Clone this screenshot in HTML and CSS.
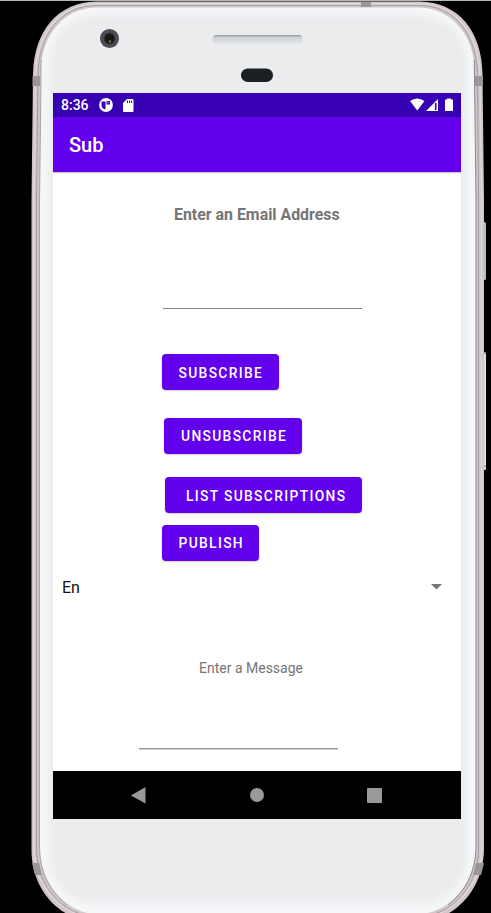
FILE: index.html
```html
<!DOCTYPE html>
<html lang="en">
<head>
<meta charset="utf-8">
<title>Sub</title>
<link rel="stylesheet" href="styles.css">
</head>
<body>
<div class="device">
  <svg class="frame" width="491" height="913" viewBox="0 0 491 913" aria-hidden="true">
    <defs>
      <filter id="soft" x="-10%" y="-10%" width="120%" height="120%"><feGaussianBlur stdDeviation="3"/></filter>
      <linearGradient id="speaker" x1="0" y1="0" x2="0" y2="1"><stop offset="0" stop-color="#90959f"/><stop offset=".3" stop-color="#d0d3d9"/><stop offset="1" stop-color="#e1e3e8"/></linearGradient>
    </defs>
    <rect width="491" height="1" fill="#b5b7b6"/>
    <rect x="482" y="222" width="4" height="58" rx="1.500" fill="#b9bcbd"/>
    <rect x="482" y="352" width="4" height="118" rx="1.500" fill="#dededc"/>
    <path d="M483 353h3M483 466h3" stroke="#777"/>
    <path d="M96 1.500H420C458 2 482 31 482.500 74L484 200V848C484 890 454 921 420 921H95C60 921 31.500 890 31.500 850V200L33 74C34 31 58 2 96 1.500Z" fill="#cfc6c9"/>
    <path d="M96 4H420C456 4 479 34 480 76L481.500 200V848C481.500 886 452 917 420 917H95C63 917 34 888 34 848V200L35.500 76C36 34 60 4 96 4Z" fill="none" stroke="#ded6d9" stroke-width="1.500"/>
    <path d="M96 5.500H420C455 5.500 477 35 477.500 76L478.500 200V848C478.500 886 452 916 420 916H95C63 916 36.500 886 36.500 848V200L38 76C38 35 61 5.500 96 5.500Z" fill="none" stroke="#a69fa3"/>
    <path d="M32.500 76H40V86H32.500ZM475 76H483V86H475ZM361 2H371V7H361ZM32 863H39L42 875H35ZM476 863H484L481 875H473Z" fill="#9c9699"/>
    <path d="M97 7.500H418C451 7.500 474 35 474.500 70L476 200V848C476 882 450 914 418 914H97C65 914 40 882 40 848V200L41 70C41.500 35 64 7.500 97 7.500Z" fill="#f5f6f8"/>
    <path d="M474.300 60L474.500 80 476 200V848Q475 884 448 905" fill="none" stroke="#8d888e"/>
    <path d="M41 60V80L39.500 200V848Q40 884 67 905" fill="none" stroke="#aaa4a8"/>
    <rect x="49" y="15" width="418" height="889" rx="48" fill="#eaecee" filter="url(#soft)"/>
    <circle cx="109.500" cy="38.500" r="9.500" fill="#45474b"/>
    <circle cx="109.500" cy="38.500" r="7.500" fill="none" stroke="#65676b" stroke-dasharray="1 1"/>
    <circle cx="109.500" cy="38.500" r="5.200" fill="#15171a"/>
    <circle cx="110" cy="41.500" r="1.200" fill="#857634"/>
    <rect x="212.500" y="35" width="90" height="8.500" rx="4" fill="url(#speaker)"/>
    <rect x="241" y="68.500" width="32" height="13.500" rx="6.750" fill="#1c2024"/>
  </svg>
  <main class="screen">
    <div class="status">
      <span class="time">8:36</span>
      <svg class="pocket" width="14" height="14" viewBox="0 0 14 14"><circle cx="7" cy="7" r="6.900" fill="#fff"/><path d="M2.500 3.500H6.500V11.500Q2.500 10.500 2.500 7ZM7.500 3H11V6.500H7.500Z" fill="#3700b3"/><path d="M8 3.500H10V5.500H8Z" fill="#fff" opacity=".35"/></svg>
      <svg class="card" width="11" height="13" viewBox="0 0 11 13"><path d="M4 0H9.500Q10.500 0 10.500 1V12Q10.500 13 9.500 13H1Q0 13 0 12V4Z" fill="#fff"/><path d="M4.500 1.500V4M6.500 1.500V4M8.500 1.500V4" stroke="#3700b3"/></svg>
      <svg class="signals" width="44" height="14" viewBox="0 0 44 14"><path d="M0 3Q7.200-2 14.500 3L7.250 12.500Z" fill="#fff"/><path d="M16 13 28 1V13Z" fill="#fff"/><path d="M25.700 5V12" stroke="#3700b3" stroke-width="1.600"/><path d="M35 1.500H37V.500H41V1.500H43V13H35Z" fill="#fff"/></svg>
    </div>
    <header class="appbar">Sub</header>
    <section class="content">
      <h1 class="label email">Enter an Email Address</h1>
      <div class="field email-field"></div>
      <button class="btn subscribe">SUBSCRIBE</button>
      <button class="btn unsubscribe">UNSUBSCRIBE</button>
      <button class="btn list">LIST SUBSCRIPTIONS</button>
      <button class="btn publish">PUBLISH</button>
      <div class="spinner"><span>En</span><svg width="11" height="6" viewBox="0 0 11 6"><path d="M0 0H11L5.500 5.500Z" fill="#757575"/></svg></div>
      <p class="label message">Enter a Message</p>
      <div class="field message-field"></div>
    </section>
    <nav class="nav">
      <svg width="15" height="17" viewBox="0 0 15 17"><path d="M0 8.500 14.500 0V16.500Z" fill="#999"/></svg>
      <svg width="14" height="14" viewBox="0 0 14 14"><circle cx="7" cy="7" r="7" fill="#999"/></svg>
      <svg width="15" height="15" viewBox="0 0 15 15"><rect width="15" height="15" rx="1" fill="#999"/></svg>
    </nav>
  </main>
</div>
</body>
</html>
```
FILE: styles.css
```css
* { box-sizing: border-box; }
body { margin: 0; background: #000; font-family: Roboto, sans-serif; overflow: hidden; }
svg { display: block; flex: none; }
.device { position: relative; width: 491px; height: 913px; padding: 93px 30px 94px 53px; background: #000; overflow: hidden; }
.frame { position: absolute; inset: 0; }
.screen { position: relative; width: 408px; height: 726px; display: flex; flex-direction: column; background: #fff; }
.status { height: 24px; flex: none; display: flex; align-items: center; padding: 0 7px 0 8px; background: #3700b3; color: #fff; }
.time { width: 38px; font-size: 14px; font-weight: 500; line-height: 24px; }
.card { margin-left: 10px; }
.signals { margin-left: auto; }
.appbar { height: 55px; flex: none; padding-left: 16px; background: #6200ee; color: #fff; font-size: 20px; font-weight: 500; line-height: 57px; box-shadow: 0 1px 1px #ccc; }
.content { flex: 1; min-height: 0; display: flex; flex-direction: column; align-items: flex-start; }
.label { margin: 0; color: #757575; white-space: nowrap; }
.email { margin: 33px 0 0 121px; font-size: 15.9px; font-weight: 700; line-height: 20px; }
.field { width: 199px; border-bottom: 1px solid #858585; }
.email-field { height: 84px; margin-left: 110px; }
.btn { height: 36px; flex: none; border: 0; border-radius: 4px; padding: 1px 0 0 17px; background: #6200ee; color: #fff; font: 500 13.8px/36px Roboto, sans-serif; letter-spacing: 1.35px; text-align: left; white-space: nowrap; box-shadow: 0 1px 2px #0003; }
.subscribe { width: 117px; margin: 45px 0 0 109px; padding-left: 16.5px; }
.unsubscribe { width: 138px; margin: 28px 0 0 111px; padding-top: 0; line-height: 35px; }
.list { width: 197px; margin: 23px 0 0 112px; padding-left: 21px; }
.publish { width: 97px; margin: 12px 0 0 109px; padding: 0 0 0 16.5px; line-height: 35px; }
.spinner { width: 100%; height: 24px; margin-top: 14px; padding: 0 19px 0 9px; display: flex; align-items: center; justify-content: space-between; color: #111; font-size: 16px; }
.message { margin: 59px 0 0 146px; font-size: 14px; line-height: 20px; }
.message-field { height: 71px; margin-left: 86px; border-color: #999; box-shadow: 0 1px #ccc; }
.nav { height: 48px; flex: none; display: flex; align-items: center; justify-content: space-between; padding: 0 79px 0 78px; background: #000; }
```
